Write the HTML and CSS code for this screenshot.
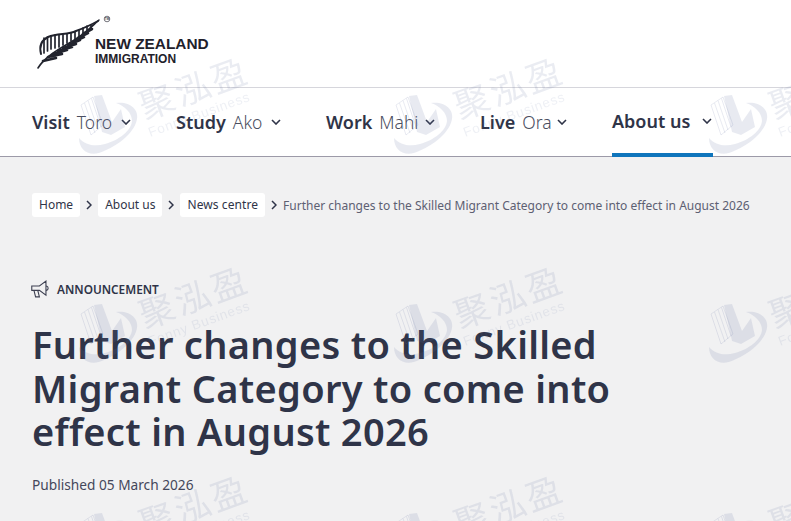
FILE: index.html
```html
<!DOCTYPE html>
<html lang="en">
<head>
<meta charset="utf-8">
<title>Further changes to the Skilled Migrant Category</title>
<link rel="stylesheet" href="styles.css">
</head>
<body>
<header class="site-header">
  <div class="brand">
    <a class="logo" href="#">
      <svg class="fern" viewBox="36 14 76 56" width="76" height="56" aria-hidden="true">
        <g fill="none" stroke="#22242e" stroke-linecap="round">
          <path class="stem" d="M38 67C44 57 57 49 71 41S90 27 99 19"/>
          <path class="arch" d="M41 53C39 45 42 39 48 36C58 32 68 34 76 30C84 27 91 24 98 20"/>
          <path class="teeth" d="M44 37L44 52M47.500 36L47.500 50M51 35L51 48M55 34L55 47M59 34L59 46M63 33.500L63 44M67 33L67 42M71 32L71 40M75 31L75 38M79 29L79 36M83 27L83 33M87 25L87 30M91 24L91 27"/>
          <path class="leaf" d="M43 60L56 57M48 56L62 53M53 53L67 49M58 50L72 46M63 47L76 43M68 44L80 39M73 41L84 36M78 37L88 32M83 33L92 28"/>
        </g>
        <circle cx="107" cy="18" r="2.800" fill="none" stroke="#3a3a44" stroke-width=".7"/>
        <text class="tm" x="107" y="19.200" text-anchor="middle">TM</text>
      </svg>
      <span class="wordmark">
        <span class="wordmark-top">NEW ZEALAND</span>
        <span class="wordmark-sub">IMMIGRATION</span>
      </span>
    </a>
  </div>
  <nav class="main-nav">
    <a class="nav-item nav-visit" href="#"><b>Visit</b><span class="maori">Toro</span><svg class="chev" viewBox="0 0 10 6"><path d="M1 1l4 4 4-4"/></svg></a>
    <a class="nav-item nav-study" href="#"><b>Study</b><span class="maori">Ako</span><svg class="chev" viewBox="0 0 10 6"><path d="M1 1l4 4 4-4"/></svg></a>
    <a class="nav-item nav-work" href="#"><b>Work</b><span class="maori">Mahi</span><svg class="chev" viewBox="0 0 10 6"><path d="M1 1l4 4 4-4"/></svg></a>
    <a class="nav-item nav-live" href="#"><b>Live</b><span class="maori">Ora</span><svg class="chev" viewBox="0 0 10 6"><path d="M1 1l4 4 4-4"/></svg></a>
    <a class="nav-item active" href="#"><b>About us</b><svg class="chev" viewBox="0 0 10 6"><path d="M1 1l4 4 4-4"/></svg></a>
  </nav>
</header>
<main class="content">
  <ol class="crumbs">
    <li><a class="pill" href="#">Home</a></li>
    <li><svg class="sep" viewBox="0 0 6 10"><path d="M1 1l4 4-4 4"/></svg><a class="pill" href="#">About us</a></li>
    <li><svg class="sep" viewBox="0 0 6 10"><path d="M1 1l4 4-4 4"/></svg><a class="pill pill-news" href="#">News centre</a></li>
    <li><svg class="sep" viewBox="0 0 6 10"><path d="M1 1l4 4-4 4"/></svg><span class="current">Further changes to the Skilled Migrant Category to come into effect in August 2026</span></li>
  </ol>
  <div class="tag">
    <svg class="tag-icon" viewBox="0.5 1 17 16.500" aria-hidden="true">
      <path d="M1 6.500H8L14 2V15L8 10.500H1ZM3 10.500L4.500 16.500H8L6.500 10.500M14.500 6.500C16.500 7 16.500 10 14.500 10.500"/>
    </svg>
    <span>ANNOUNCEMENT</span>
  </div>
  <h1 class="title">Further changes to the Skilled Migrant Category to come into effect in August 2026</h1>
  <p class="published">Published 05 March 2026</p>
</main>
<svg class="watermark" width="791" height="521" aria-hidden="true">
  <defs>
    <pattern id="wm" patternUnits="userSpaceOnUse" width="315" height="209">
      <g transform="translate(79 95)">
        <path d="M2 10L14 2L24 30L12 40Z M5.500 8L16 38 M9 5.500L19 35 M12.500 3.500L22 32" class="wm-lines"/>
        <path d="M15 1L23 0L33 27L42 14L46 32L32 40L23 37Z"/>
        <path d="M37 8C50 6 60 14 58 24C56 36 42 50 20 58C8 61 0 54 0 43C6 50 16 52 26 49C40 45 52 36 53 26C53 18 46 11 37 8Z"/>
      </g>
      <g transform="rotate(-20 194 88)">
        <text x="194" y="101" text-anchor="middle" class="wm-cjk">聚泓盈</text>
      </g>
      <g transform="rotate(-20 199 114)">
        <text x="199" y="119" text-anchor="middle" class="wm-latin">Fonny Business</text>
      </g>
    </pattern>
  </defs>
  <rect width="791" height="521" fill="url(#wm)"/>
</svg>
</body>
</html>
```

FILE: styles.css
```css
* { box-sizing: border-box; }
html, body { margin: 0; padding: 0; }
body {
  position: relative;
  width: 791px;
  height: 521px;
  overflow: hidden;
  background: #f1f1f2;
  color: #2f3448;
  font-family: "Noto Sans", "Open Sans", sans-serif;
}
a { color: inherit; text-decoration: none; }

.site-header {
  background: #fff;
  border-bottom: 1px solid #9c9aa8;
  height: 157px;
}
.brand {
  height: 87px;
  padding: 15px 0 0 36px;
}
.logo { display: flex; align-items: flex-start; }
.fern { display: block; flex: none; margin-right: -17px; }
.fern .stem { stroke-width: 1.6; }
.fern .arch { stroke-width: 2; }
.fern .teeth { stroke-width: 1.7; }
.fern .leaf { stroke-width: 2.6; }
.tm { font-family: "Liberation Sans", sans-serif; font-size: 3px; font-weight: 700; fill: #3a3a44; }
.wordmark {
  display: flex;
  flex-direction: column;
  margin-top: 21px;
  color: #1f212b;
  font-family: "Liberation Sans", sans-serif;
  font-weight: 700;
  white-space: nowrap;
}
.wordmark-top { font-size: 15.4px; line-height: 16px; }
.wordmark-sub { font-size: 12px; line-height: 14px; }

.main-nav {
  display: flex;
  gap: 45px;
  height: 69px;
  padding-left: 32px;
  border-top: 1px solid #d6d6dc;
}
.nav-item {
  display: flex;
  align-items: center;
  height: 69px;
  font-size: 18px;
  padding-bottom: 2px;
  white-space: nowrap;
}
.nav-visit { width: 99px; }
.nav-study { width: 105px; }
.nav-work { width: 109px; }
.nav-live { width: 87px; }
.nav-item b { font-weight: 600; }
.maori { margin-left: 7px; font-weight: 300; color: #4a4e60; font-size: 17.500px; }
.chev { width: 10px; height: 6px; margin-left: auto; fill: none; stroke: #2f3448; stroke-width: 1.600; }
.nav-item.active { width: 101px; border-bottom: 4px solid #0f75bc; padding-bottom: 0; }
.nav-item.active .chev { transform: translateX(-1px); }

.content { padding: 36px 32px 0; }
.crumbs {
  display: flex;
  align-items: center;
  margin: 0;
  padding: 0;
  list-style: none;
  font-size: 12px;
  white-space: nowrap;
}
.crumbs li { display: flex; align-items: center; }
.pill {
  display: block;
  height: 24px;
  padding: 0 7px;
  line-height: 24px;
  background: #fff;
  border-radius: 3px;
}
.pill-news { letter-spacing: .08px; }
.sep { width: 6px; height: 10px; margin: 0 6px; fill: none; stroke: #2f3448; stroke-width: 1.500; }
.current { color: #5d6072; }

.tag {
  display: flex;
  align-items: center;
  gap: 7px;
  margin-top: 63px;
  margin-left: -1px;
  height: 18px;
  font-size: 11.800px;
  font-weight: 600;
}
.tag-icon { width: 19px; height: 18px; fill: none; stroke: #3c3f50; stroke-width: 1; }
.title {
  margin: 25px 0 0;
  width: 610px;
  font-size: 38px;
  line-height: 43.5px;
  letter-spacing: .3px;
  font-weight: 600;
}
.published {
  margin: 21px 0 0;
  font-size: 13.700px;
  color: #44475a;
}

.watermark {
  position: absolute;
  left: 0;
  top: 0;
  pointer-events: none;
}
.watermark path { fill: #5d6c9c; fill-opacity: .14; stroke: none; }
.watermark path.wm-lines { fill: none; stroke: #5d6c9c; stroke-opacity: .14; stroke-width: 1; }
.wm-cjk { font-family: "Noto Sans CJK SC", sans-serif; font-size: 35px; letter-spacing: 3px; fill: #5d6c9c; fill-opacity: .13; }
.wm-latin { font-family: "Liberation Sans", sans-serif; font-size: 13.5px; letter-spacing: .8px; fill: #5d6c9c; fill-opacity: .1; }
```
